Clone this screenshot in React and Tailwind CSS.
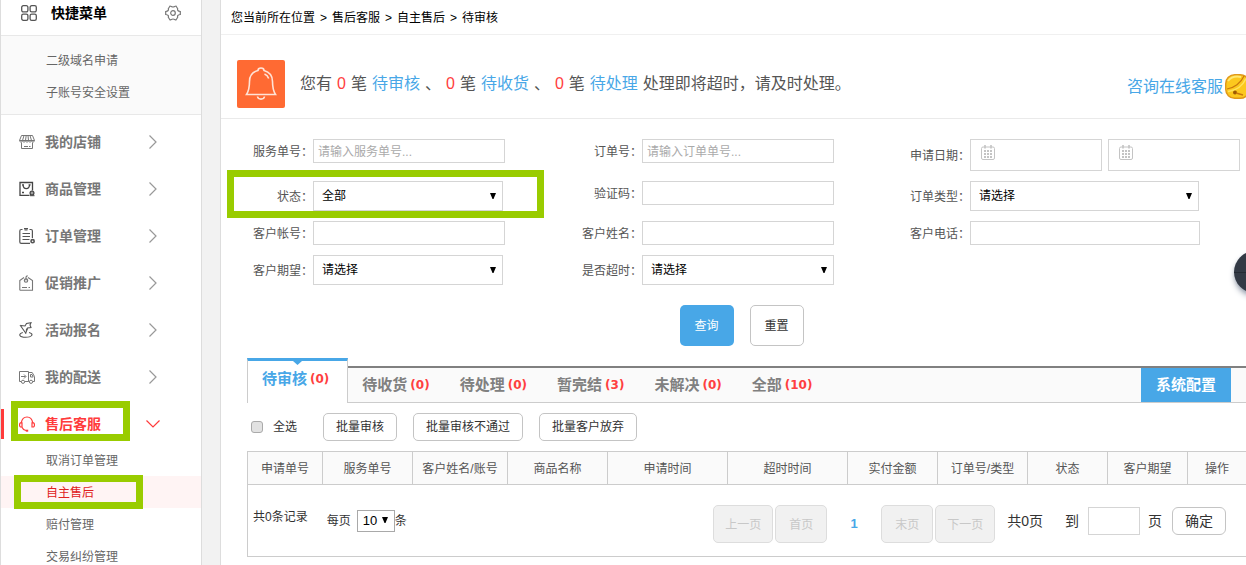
import React, { useState } from 'react';

const iconProps = {
  width: 16,
  height: 16,
  viewBox: '0 0 16 16',
  fill: 'none',
  stroke: 'currentColor',
  strokeWidth: 1,
  'aria-hidden': true,
};

const GridIcon = () => (
  <svg {...iconProps} strokeWidth="1.3">
    <rect x="0.7" y="0.7" width="6.2" height="6.2" rx="1.6" />
    <rect x="9.1" y="0.7" width="6.2" height="6.2" rx="1.6" />
    <rect x="0.7" y="9.1" width="6.2" height="6.2" rx="1.6" />
    <rect x="9.1" y="9.1" width="6.2" height="6.2" rx="1.6" />
  </svg>
);

const GearIcon = () => (
  <svg {...iconProps} strokeWidth="1.2">
    <path d="M5 1c1.200 0 1.500 1 3 1s1.800-1 3-1l1.700 2.800c-.5 1.500 0 2.200 2.600 2.700v3c-2.600.5-3.100 1.200-2.600 2.700L11 15c-1.200 0-1.500-1-3-1s-1.800 1-3 1l-1.700-2.800c.5-1.500 0-2.200-2.600-2.700v-3c2.600-.5 3.100-1.200 2.600-2.700z" />
    <circle cx="8" cy="8" r="2.3" />
  </svg>
);

const ShopIcon = () => (
  <svg {...iconProps}>
    <path d="M2.500 1.500h11l2 5H.5z" />
    <path d="M.5 6.500c0 2 3 2 3 0 0 2 3 2 3 0 0 2 3 2 3 0 0 2 3 2 3 0 0 2 3 2 3 0" />
    <path d="M5 1.500l-1.500 5M7.200 1.500l-.7 5M9 1.500l.5 5M11 1.500l1.500 5" />
    <path d="M2.500 8.500v6h11v-6M5 12.500h4M10 12.500h1.500" />
  </svg>
);

const GoodsIcon = () => (
  <svg {...iconProps} strokeWidth="1.3" stroke="#444">
    <path d="M10.500 14.400H1V1.500h12.500v8" />
    <path d="M4 4c.5 4.800 6 4.800 6.600 0M3 3.800h2M9.600 3.800h2M3 11.500h2" />
    <circle cx="13" cy="12" r="1.900" />
    <path d="M12 12h2M11 14.700h4.500" strokeWidth="1" />
  </svg>
);

const OrderIcon = () => (
  <svg {...iconProps} strokeWidth="1.200" stroke="#555">
    <path d="M3.500 1.500H2.200c-.9 0-1.400.5-1.400 1.400v11c0 .9.5 1.400 1.400 1.400H11M10.500 1.500H12c.9 0 1.400.5 1.400 1.400V10" />
    <path d="M5 .6h4M5.500 2h3" />
    <path d="M3.500 5.500h7.500M3.500 8.500h7.500M3.500 11.500h7" strokeWidth="1" />
    <circle cx="13.600" cy="13.200" r="1.600" strokeWidth="1.600" />
  </svg>
);

const PromoIcon = () => (
  <svg {...iconProps} strokeWidth="1.100">
    <path d="M.8 15.300V5.500L5 2.500M9 2.500l4.500 3v9.800H.8" />
    <circle cx="7" cy="5.600" r="1.700" />
    <path d="M7 5.500V2L8.500.5M3 12.500h5M9.500 12.500H11" />
  </svg>
);

const ActivityIcon = () => (
  <svg {...iconProps} strokeWidth="1.100" stroke="#555">
    <path d="M1 3l6 8.500M2 3.500l4 .500 1.500-2.500L12 .800l-1 2.200 1 2.500-3.500.5L7 8.500" />
    <path d="M3.800 10.500c-5 1.500-3.500 4.700 2.700 4.700s9-3 3.500-4.700M8.500 6.500l-2 5" />
  </svg>
);

const TruckIcon = () => (
  <svg {...iconProps}>
    <path d="M2 12.500H.5v-10h9v10H6M9.500 3.500h3.700l2.300 4v5h-1.700M9.500 12.500h1" />
    <path d="M11.500 5.500h1.500l1.200 2.500h-2.700zM2 7.500h4.500M5 5.500l2 2-2 2" />
    <circle cx="4" cy="12.800" r="1.600" />
    <circle cx="12" cy="12.800" r="1.600" />
  </svg>
);

const HeadsetIcon = () => (
  <svg {...iconProps} strokeWidth="1.200">
    <path d="M2.200 6.800C3 3 5 1 8 1s5 2 5.800 5.800" />
    <path d="M3 6.800H1.500c-1.300 1-1.300 3.200 0 4.200H3zM13 6.800h1.500c1.300 1 1.300 3.200 0 4.200H13zM2.800 11c.8 2 2 3 4.200 3.500" />
    <path d="M6.800 14.700h2.400" strokeWidth="2" />
  </svg>
);

const BellIcon = () => (
  <svg width="48" height="48" viewBox="0 0 48 48" fill="none" stroke="#ffe3d6" strokeWidth="1.600" aria-hidden="true">
    <path d="M21 10.500c0-3.300 6-3.300 6 0 5.500 1.500 8.500 5.500 8.500 11 0 6 .500 9 3 13H9.500c2.500-4 3-7 3-13 0-5.500 3-9.500 8.500-11z" />
    <path d="M20.500 36.500c.5 3.500 6.500 3.500 7 0M27.500 14c2 .8 3.500 2.300 4.200 4.500" />
  </svg>
);

const JingleIcon = () => (
  <svg className="shrink-0" width="25" height="25" viewBox="0 0 25 25" aria-hidden="true">
    <rect x="0.700" y="0.700" width="23.600" height="23.600" rx="9" fill="#fcc81e" stroke="#e0981a" strokeWidth="1.400" />
    <path d="M3 7c3-4 8-5 13-4" stroke="#ffe873" strokeWidth="2" fill="none" />
    <path d="M2 15C9 14 16 9 19 2" stroke="#c9780c" strokeWidth="1.200" fill="none" />
    <path d="M3 17.500c8-1 15-6 18-13" stroke="#ffe35c" strokeWidth="1.600" fill="none" />
    <circle cx="10" cy="18.500" r="2" fill="#9c5a06" />
    <path d="M11 19l7 2" stroke="#c9780c" strokeWidth="1.500" />
  </svg>
);

const CalendarIcon = () => (
  <svg width="14" height="15" viewBox="0 0 14 15" fill="none" stroke="#c4c4c4" aria-hidden="true">
    <rect x="0.500" y="2" width="13" height="12.500" rx="1.500" />
    <path d="M4 0v3.500M10 0v3.500" strokeWidth="1.600" />
    <path d="M3 6h8M3 9h8M3 12h8" strokeWidth="2" strokeDasharray="2 1" />
  </svg>
);

const Chevron = ({ open }) =>
  open ? (
    <svg className="-ml-[3px] text-[#ff3b3b]" width="14" height="8" viewBox="0 0 14 8" fill="none" stroke="currentColor" strokeWidth="1.200" aria-hidden="true">
      <path d="M.5.5L7 7 13.500.5" />
    </svg>
  ) : (
    <svg className="text-[#999]" width="8" height="14" viewBox="0 0 8 14" fill="none" stroke="currentColor" strokeWidth="1.200" aria-hidden="true">
      <path d="M.5.500L7 7 .5 13.500" />
    </svg>
  );

const quickLinks = ['二级域名申请', '子账号安全设置'];

const crumbs = ['您当前所在位置', '售后客服', '自主售后', '待审核'];

const menu = [
  { name: '我的店铺', icon: <ShopIcon /> },
  { name: '商品管理', icon: <GoodsIcon /> },
  { name: '订单管理', icon: <OrderIcon /> },
  { name: '促销推广', icon: <PromoIcon /> },
  { name: '活动报名', icon: <ActivityIcon /> },
  { name: '我的配送', icon: <TruckIcon /> },
  {
    name: '售后客服',
    icon: <HeadsetIcon />,
    children: ['取消订单管理', '自主售后', '赔付管理', '交易纠纷管理'],
  },
];

const tabs = [
  { name: '待收货', count: 0 },
  { name: '待处理', count: 0 },
  { name: '暂完结', count: 3 },
  { name: '未解决', count: 0 },
  { name: '全部', count: 10 },
];

const columns = [
  { name: '申请单号', width: 'w-[75px]' },
  { name: '服务单号', width: 'w-[90px]' },
  { name: '客户姓名/账号', width: 'w-[95px]' },
  { name: '商品名称', width: 'w-[100px]' },
  { name: '申请时间', width: 'w-[120px]' },
  { name: '超时时间', width: 'w-[120px]' },
  { name: '实付金额', width: 'w-[90px]' },
  { name: '订单号/类型', width: 'w-[90px]' },
  { name: '状态', width: 'w-[80px]' },
  { name: '客户期望', width: 'w-[80px]' },
  { name: '操作', width: '' },
];

const Sidebar = () => (
  <aside className="w-[202px] shrink-0 border-x border-[#ddd] bg-white">
    <div className="flex h-9 items-start border-b border-[#e8e8e8] pl-5 pt-[5px]">
      <span className="text-[#555]">
        <GridIcon />
      </span>
      <h2 className="ml-[14px] flex-1 text-[14px] leading-4 font-bold text-black">快捷菜单</h2>
      <button type="button" className="mr-5 text-[#777]" aria-label="设置">
        <GearIcon />
      </button>
    </div>

    <ul className="border-b border-[#e8e8e8] bg-[#fafafa] pt-2 pb-[6px]">
      {quickLinks.map((link) => (
        <li key={link}>
          <a href="#" className="block pt-[2px] pl-[45px] leading-[30px] text-[#666]">
            {link}
          </a>
        </li>
      ))}
    </ul>

    <ul className="flex flex-col gap-[7px] pt-[7px]">
      {menu.map((item) => (
        <li key={item.name}>
          <button
            type="button"
            className={`relative flex h-10 w-full items-center pl-[18px] text-left ${
              item.children ? 'text-[#ff3b3b]' : 'text-[#777]'
            }`}
          >
            {item.children && <span className="absolute left-0 h-[30px] w-[3px] bg-[#ff3b3b]" />}
            {item.icon}
            <span className="ml-[10px] w-[104px] text-[14px] font-bold">{item.name}</span>
            <Chevron open={Boolean(item.children)} />
            {item.children && (
              <span className="absolute -top-[3px] left-[10px] h-10 w-[119px] border-[7px] border-[#9c0]" />
            )}
          </button>
          {item.children && (
            <ul>
              {item.children.map((child) => (
                <li key={child} className={child === '自主售后' ? 'relative bg-[#fff4f4]' : ''}>
                  <a
                    href="#"
                    className={`block pt-[2px] pl-[45px] leading-[30px] ${
                      child === '自主售后' ? 'text-[#e02020]' : 'text-[#666]'
                    }`}
                  >
                    {child}
                  </a>
                  {child === '自主售后' && (
                    <span className="absolute -top-px left-[13px] h-[34px] w-[129px] border-[7px] border-[#9c0]" />
                  )}
                </li>
              ))}
            </ul>
          )}
        </li>
      ))}
    </ul>
  </aside>
);

const Field = ({ id, label, children }) => (
  <div className="flex items-center">
    <label htmlFor={id} className="w-[92px] shrink-0 pt-[2px] text-right text-[#555]">
      {label}：
    </label>
    {children}
  </div>
);

const TextField = ({ id, label, width = 'w-48', placeholder }) => (
  <Field id={id} label={label}>
    <input
      id={id}
      type="text"
      placeholder={placeholder}
      className={`h-6 border border-[#d5d5d5] bg-white px-1 pt-[2px] placeholder:text-[#aaa] ${width}`}
    />
  </Field>
);

const DownArrow = ({ className }) => (
  <svg className={`pointer-events-none absolute ${className}`} width="6" height="6" viewBox="0 0 6 6" aria-hidden="true">
    <path d="M0 0h6L3.500 6h-1z" fill="#000" />
  </svg>
);

const SelectField = ({ id, label, width, option }) => (
  <Field id={id} label={label}>
    <div className={`relative ${width}`}>
      <select id={id} className="block h-[30px] w-full appearance-none border border-[#d5d5d5] bg-white px-2 text-black">
        <option>{option}</option>
      </select>
      <DownArrow className="top-3 right-[7px]" />
    </div>
  </Field>
);

const DateInput = ({ id, label }) => (
  <div className="relative">
    <input id={id} type="text" aria-label={label} className="block h-8 w-[132px] border border-[#d5d5d5] bg-white pr-2 pl-8" />
    <span className="pointer-events-none absolute top-[6px] left-[11px]">
      <CalendarIcon />
    </span>
  </div>
);

const SearchForm = () => (
  <form className="pt-5" onSubmit={(e) => e.preventDefault()}>
    <div className="relative grid grid-cols-[329px_328px_1fr] items-start gap-y-[10px]">
      <TextField id="serviceNo" label="服务单号" placeholder="请输入服务单号..." />
      <TextField id="orderNo" label="订单号" placeholder="请输入订单单号..." />
      <Field id="dateFrom" label="申请日期">
        <div className="flex gap-[6px]">
          <DateInput id="dateFrom" label="开始日期" />
          <DateInput id="dateTo" label="结束日期" />
        </div>
      </Field>

      <SelectField id="status" label="状态" width="w-[190px]" option="全部" />
      <TextField id="code" label="验证码" />
      <SelectField id="orderType" label="订单类型" width="w-[229px]" option="请选择" />

      <TextField id="account" label="客户帐号" />
      <TextField id="customer" label="客户姓名" />
      <TextField id="phone" label="客户电话" width="w-[230px]" />

      <SelectField id="expect" label="客户期望" width="w-[190px]" option="请选择" />
      <SelectField id="overtime" label="是否超时" width="w-48" option="请选择" />

      <span className="pointer-events-none absolute top-[31px] left-[6px] h-12 w-[317px] border-[7px] border-[#9c0]" />
    </div>

    <div className="mt-5 flex justify-center gap-4 pl-4">
      <button type="submit" className="h-[41px] w-[54px] rounded-[5px] bg-[#48a7e7] text-white">
        查询
      </button>
      <button type="reset" className="h-[41px] w-[54px] rounded-[5px] border border-[#c4c4c4] bg-white text-[#333]">
        重置
      </button>
    </div>
  </form>
);

const Count = ({ value }) => (
  <span className="ml-[3px] font-['DejaVu_Sans'] text-[12px] text-[#ff4040]">({value})</span>
);

const Tabs = () => (
  <div className="mt-3 flex items-end">
    <button
      type="button"
      className="relative flex h-[45px] items-center border-x border-t-[3px] border-x-[#ccc] border-t-[#48a7e7] bg-white pr-[18px] pb-[6px] pl-[14px] text-[15px] font-bold text-[#48a7e7]"
    >
      <svg className="absolute top-0 left-[45px]" width="9" height="4" viewBox="0 0 9 4" aria-hidden="true">
        <path d="M0 0h9L4.500 4z" fill="#48a7e7" />
      </svg>
      待审核
      <Count value={0} />
    </button>
    <div className="flex h-[37px] flex-1 gap-[2px] border-t-2 border-b border-t-[#808080] border-b-[#ccc] bg-[#fafafa]">
      {tabs.map((tab) => (
        <button
          key={tab.name}
          type="button"
          className="flex items-center px-[14px] text-[15px] font-bold text-[#808080]"
        >
          {tab.name}
          <Count value={tab.count} />
        </button>
      ))}
      <button type="button" className="mr-[15px] ml-auto w-[90px] bg-[#48a7e7] text-[15px] font-bold text-white">
        系统配置
      </button>
    </div>
  </div>
);

const BulkActions = () => {
  const [checked, setChecked] = useState(false);

  return (
    <div className="flex h-12 items-center gap-4 pl-1 text-[#333]">
      <label className="mr-[10px] flex items-center gap-[10px]">
        <input
          type="checkbox"
          checked={checked}
          onChange={() => setChecked(!checked)}
          className="h-3 w-3 appearance-none rounded-[3px] border border-[#aaa] bg-[#e2e2e2] checked:bg-[#48a7e7]"
        />
        全选
      </label>
      {['批量审核', '批量审核不通过', '批量客户放弃'].map((name) => (
        <button key={name} type="button" className="h-7 rounded-[5px] border border-[#c4c4c4] bg-white px-3">
          {name}
        </button>
      ))}
    </div>
  );
};

const PageButton = ({ width, children }) => (
  <button
    type="button"
    disabled
    className={`h-[38px] rounded-[5px] border border-[#ddd] bg-[#f1f1f1] pt-[2px] text-[#c8c8c8] ${width}`}
  >
    {children}
  </button>
);

const Pager = () => (
  <div className="flex h-[72px] items-center border-b border-[#ccc] pr-5 pl-[5px] text-[#333]">
    <span className="pb-2">共0条记录</span>
    <label htmlFor="pageSize" className="ml-[19px]">
      每页
    </label>
    <div className="relative ml-[6px]">
      <select
        id="pageSize"
        className="block h-[22px] w-[38px] appearance-none border border-[#a9a9a9] bg-white pl-[5px] font-['Liberation_Sans'] text-[13px] text-black"
      >
        <option>10</option>
      </select>
      <DownArrow className="top-[7px] right-[7px]" />
    </div>
    <span>条</span>

    <div className="ml-auto flex items-center gap-[2px] pt-[6px]">
      <PageButton width="w-[60px]">上一页</PageButton>
      <PageButton width="w-[52px]">首页</PageButton>
      <span className="w-[50px] text-center font-['Liberation_Sans'] text-[13px] font-bold text-[#48a7e7]">1</span>
      <PageButton width="w-[52px]">末页</PageButton>
      <PageButton width="w-[60px]">下一页</PageButton>
    </div>
    <span className="ml-3 text-[14px]">共0页</span>
    <label htmlFor="pageNo" className="ml-[22px] text-[14px]">
      到
    </label>
    <input id="pageNo" type="text" className="ml-[9px] h-7 w-[52px] border border-[#d5d5d5] bg-white px-1" />
    <span className="ml-2 text-[14px]">页</span>
    <button type="button" className="ml-[10px] h-7 rounded-[6px] border border-[#c4c4c4] bg-white px-3 text-[14px]">
      确定
    </button>
  </div>
);

const Alert = () => (
  <section className="flex h-[84px] items-center border-b border-[#eaeaea] pt-[14px] pl-4 text-[16px]">
    <div className="mr-[15px] rounded-[2px] bg-[#ff6a33]">
      <BellIcon />
    </div>
    <p className="flex flex-1 gap-[5px] text-[#555]">
      <span>您有</span>
      {['待审核', '待收货', '待处理'].map((name, i) => (
        <React.Fragment key={name}>
          <span className="text-[#ff4040]">0</span>
          <span>笔</span>
          <a href="#" className="text-[#48a7e7]">
            {name}
          </a>
          {i < 2 && <span>、</span>}
        </React.Fragment>
      ))}
      <span>处理即将超时，请及时处理。</span>
    </p>
    <a href="#" className="-mr-1 flex items-center gap-[2px] pt-[6px] text-[#48a7e7]">
      咨询在线客服
      <JingleIcon />
    </a>
  </section>
);

export default function App() {
  return (
    <div className="relative flex h-screen gap-[18px] overflow-hidden bg-[#f2f2f2] font-['Liberation_Sans','Noto_Sans_CJK_SC',sans-serif] text-[12px] leading-4">
      <Sidebar />

      <main className="min-w-0 flex-1 border-l border-[#ddd] bg-white">
        <nav className="flex h-[35px] items-center gap-[5px] border-b border-[#f0f0f0] pt-[2px] pl-[10px] text-black">
          {crumbs.map((crumb, i) => (
            <React.Fragment key={crumb}>
              {i > 0 && <span>&gt;</span>}
              <span>{crumb}</span>
            </React.Fragment>
          ))}
        </nav>

        <Alert />
        <SearchForm />

        <div className="pl-[26px]">
          <Tabs />
          <BulkActions />
          <div className="border-l border-[#ccc]">
            <table className="w-full table-fixed border-separate border-spacing-0">
              <thead>
                <tr>
                  {columns.map((col) => (
                    <th
                      key={col.name}
                      className={`h-[34px] border-y border-r border-[#ccc] bg-[#fafafa] p-0 pt-px font-normal text-[#555] last:border-r-0 ${col.width}`}
                    >
                      {col.name}
                    </th>
                  ))}
                </tr>
              </thead>
            </table>
            <Pager />
          </div>
        </div>
      </main>

      {/* Floating helper, half out of the window */}
      <button
        type="button"
        aria-label="助手"
        className="absolute top-[251px] -right-[30px] h-[42px] w-[42px] rounded-full bg-[#333a45] shadow-md shadow-gray-400"
      >
        <span className="block h-px w-full bg-[#252b34]" />
      </button>
    </div>
  );
}
